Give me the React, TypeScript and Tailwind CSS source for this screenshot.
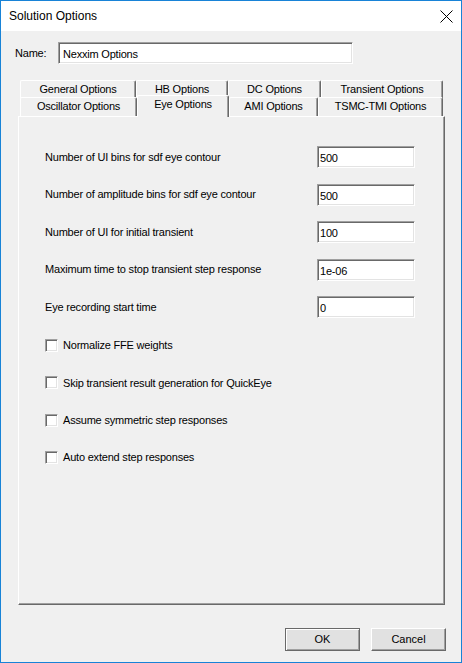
import React from 'react';

const font = "font-['Liberation_Sans',Arial,sans-serif]";

const fields = [
  { label: 'Number of UI bins for sdf eye contour', value: '500' },
  { label: 'Number of amplitude bins for sdf eye contour', value: '500' },
  { label: 'Number of UI for initial transient', value: '100' },
  { label: 'Maximum time to stop transient step response', value: '1e-06' },
  { label: 'Eye recording start time', value: '0' },
];

const checks = [
  'Normalize FFE weights',
  'Skip transient result generation for QuickEye',
  'Assume symmetric step responses',
  'Auto extend step responses',
];

const Tab: React.FC<{ label: string; className: string; selected?: boolean }> = ({ label, className, selected }) => (
  <div
    className={
      'flex justify-center bg-[#f0f0f0] border-t border-l border-white border-r border-r-[#696969] shadow-[inset_-1px_0_0_#a0a0a0] rounded-tl-[2px] rounded-tr-[2px] leading-[14px] ' +
      (selected ? 'relative z-10 -mt-[2px] -mb-[1px] h-[22px] pt-[1px] ' : 'pt-[1px] ') +
      className
    }
  >
    {label}
  </div>
);

const Sunken: React.FC<{ className: string; children?: React.ReactNode }> = ({ className, children }) => (
  <div
    className={
      'bg-white border-t border-l border-[#a0a0a0] border-r border-b border-r-white border-b-white shadow-[inset_1px_1px_0_#696969,inset_-1px_-1px_0_#e3e3e3] ' +
      className
    }
  >
    {children}
  </div>
);

export default function App() {
  return (
    <div className={`w-[462px] h-[663px] border border-[#1883d7] bg-[#f0f0f0] flex flex-col text-black ${font} text-[11px] tracking-[-0.2px]`}>
      {/* Title bar */}
      <div className="h-[30px] bg-white flex items-center justify-between pl-[8px] pr-[8px]">
        <span className="text-[12px] tracking-normal">Solution Options</span>
        <svg width="13" height="13" viewBox="0 0 13 13">
          <path d="M0.5 0.5 L12.5 12.5 M12.5 0.5 L0.5 12.5" stroke="#000" strokeWidth="1" />
        </svg>
      </div>

      {/* Name */}
      <div className="flex items-center mt-[11px] pl-[14px]">
        <span className="w-[43px]">Name:</span>
        <Sunken className="w-[295px] h-[22px] pl-[4px] pt-[3px]">Nexxim Options</Sunken>
      </div>

      {/* Tabs */}
      <div className="flex flex-col mt-[16px] ml-[17px] w-[427px]">
        <div className="flex ml-[2px]">
          <Tab label="General Options" className="w-[116px] h-[18px]" />
          <Tab label="HB Options" className="w-[92px] h-[18px]" />
          <Tab label="DC Options" className="w-[93px] h-[18px]" />
          <Tab label="Transient Options" className="w-[122px] h-[18px]" />
        </div>
        <div className="flex items-start ml-[2px] -mt-[1px]">
          <Tab label="Oscillator Options" className="w-[117px] h-[19px]" />
          <Tab label="Eye Options" className="w-[92px]" selected />
          <Tab label="AMI Options" className="w-[89px] h-[19px]" />
          <Tab label="TSMC-TMI Options" className="w-[125px] h-[19px]" />
        </div>

        {/* Panel */}
        <div className="h-[489px] border-t border-l border-white border-r border-b border-r-[#696969] border-b-[#696969] shadow-[inset_-1px_-1px_0_#a0a0a0] pl-[26px] pr-[29px] pt-[29px]">
          <div className="flex flex-col gap-[15.5px]">
            {fields.map((f) => (
              <div key={f.label} className="flex items-center justify-between h-[22px]">
                <span>{f.label}</span>
                <Sunken className="w-[98px] h-[22px] pl-[2px] pt-[3px]">{f.value}</Sunken>
              </div>
            ))}
          </div>
          <div className="flex flex-col gap-[24.3px] mt-[21px]">
            {checks.map((c) => (
              <div key={c} className="flex items-center h-[13px]">
                <Sunken className="w-[13px] h-[13px]" />
                <span className="ml-[5px]">{c}</span>
              </div>
            ))}
          </div>
        </div>
      </div>

      {/* Buttons */}
      <div className="flex justify-end gap-[11px] mt-[23px] pr-[15px]">
        <button className="w-[75px] h-[23px] bg-[#e1e1e1] border border-[#696969] shadow-[inset_1px_1px_0_#fff,inset_-1px_-1px_0_#a0a0a0] tracking-normal">
          OK
        </button>
        <button className="w-[75px] h-[23px] bg-[#e1e1e1] border border-t-white border-l-white border-r-[#696969] border-b-[#696969] shadow-[inset_-1px_-1px_0_#a0a0a0] tracking-normal">
          Cancel
        </button>
      </div>
    </div>
  );
}
